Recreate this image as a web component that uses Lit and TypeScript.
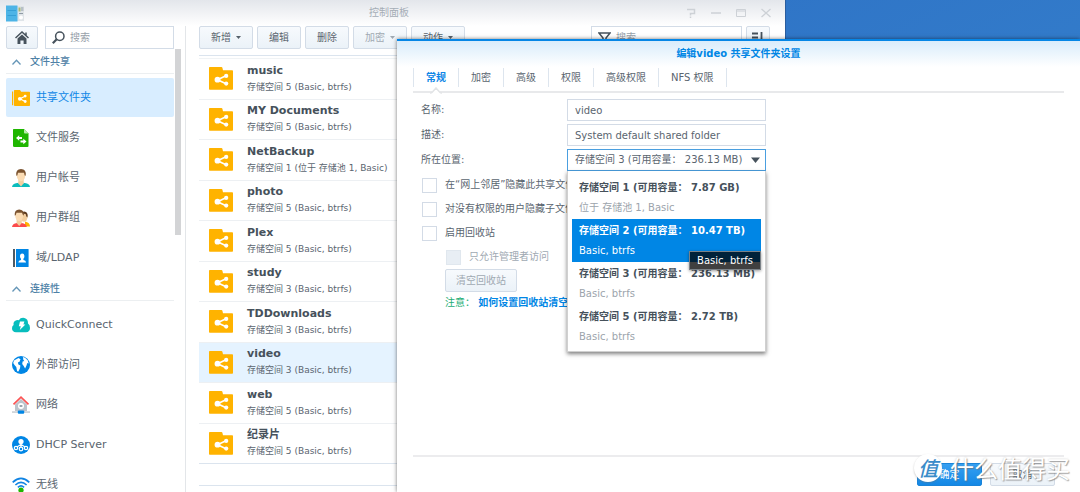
import { LitElement, html, css, svg, TemplateResult } from "lit";
import { customElement, state } from "lit/decorators.js";
import { classMap } from "lit/directives/class-map.js";

interface NavItem { icon: string; label: string; }
interface NavGroup { title: string; items: NavItem[]; }
interface Share { name: string; place: string; }
interface Volume { name: string; detail: string; }

const GROUPS: NavGroup[] = [
  {
    title: "文件共享",
    items: [
      { icon: "share", label: "共享文件夹" },
      { icon: "service", label: "文件服务" },
      { icon: "user", label: "用户帐号" },
      { icon: "group", label: "用户群组" },
      { icon: "ldap", label: "域/LDAP" },
    ],
  },
  {
    title: "连接性",
    items: [
      { icon: "cloud", label: "QuickConnect" },
      { icon: "globe", label: "外部访问" },
      { icon: "network", label: "网络" },
      { icon: "dhcp", label: "DHCP Server" },
      { icon: "wifi", label: "无线" },
    ],
  },
];

const SHARES: Share[] = [
  { name: "music", place: "存储空间 5 (Basic, btrfs)" },
  { name: "MY Documents", place: "存储空间 5 (Basic, btrfs)" },
  { name: "NetBackup", place: "存储空间 1 (位于 存储池 1, Basic)" },
  { name: "photo", place: "存储空间 5 (Basic, btrfs)" },
  { name: "Plex", place: "存储空间 5 (Basic, btrfs)" },
  { name: "study", place: "存储空间 3 (Basic, btrfs)" },
  { name: "TDDownloads", place: "存储空间 3 (Basic, btrfs)" },
  { name: "video", place: "存储空间 3 (Basic, btrfs)" },
  { name: "web", place: "存储空间 5 (Basic, btrfs)" },
  { name: "纪录片", place: "存储空间 5 (Basic, btrfs)" },
];

const VOLUMES: Volume[] = [
  { name: "存储空间 1 (可用容量： 7.87 GB)", detail: "位于 存储池 1, Basic" },
  { name: "存储空间 2 (可用容量： 10.47 TB)", detail: "Basic, btrfs" },
  { name: "存储空间 3 (可用容量： 236.13 MB)", detail: "Basic, btrfs" },
  { name: "存储空间 5 (可用容量： 2.72 TB)", detail: "Basic, btrfs" },
];

const TABS = ["常规", "加密", "高级", "权限", "高级权限", "NFS 权限"];

const ICONS: Record<string, TemplateResult> = {
  share: svg`<path d="M0 2.6h1.2v13.6H0z" fill="#ffb300"/><path d="M2 1.6Q2 1 2.6 1H8l1.2 1.8h8q.8 0 .8.8v12.6q0 .8-.8.8H2.8Q2 17 2 16.2z" fill="#ffb300"/><path d="M8 9.8l5-2.6M8 9.8l5 2.6" stroke="#fff" stroke-width="1.1"/><circle cx="7.8" cy="9.8" r="1.9" fill="#fff"/><circle cx="13.2" cy="7.1" r="1.4" fill="#fff"/><circle cx="13.2" cy="12.5" r="1.4" fill="#fff"/>`,
  service: svg`<path d="M1.5 0H12l4.5 4.5V17q0 1-1 1h-13q-1.500 0-1.500-1V1Q1 0 1.500 0z" fill="#1fb600"/><path d="M12 0l4.500 4.500H13q-1 0-1-1z" fill="#b9ecab"/><path d="M4 9l3.200-2.800v1.900H10v1.800H7.200v1.900zM14.500 12.500l-3.200-2.800v1.900H8.500v1.800h2.800v1.900z" fill="#fff"/>`,
  user: svg`<path d="M0 18q.4-3.600 6.600-4.200h4.800Q17.600 14.400 18 18z" fill="#0cbcbd"/><path d="M6.300 10h5.400v4.200L9 17.600l-2.700-3.400z" fill="#f3cf9f"/><ellipse cx="9" cy="6.800" rx="4.200" ry="5.400" fill="#fbdcb4"/><path d="M4.300 6.800Q3.400 0 9 0t4.700 6.800l-1-.4-.7-2.600H6l-.7 2.600z" fill="#7c5430"/>`,
  group: svg`<path d="M13 12.500q5 1 5 5h-5z" fill="#ffb300"/><ellipse cx="12" cy="8" rx="3.500" ry="4.800" fill="#f3cf9f"/><path d="M9 4.500Q11 1.600 14 3q2.400 1.600 1.400 5.500l-1-1-.8-2.500z" fill="#5f3d22"/><path d="M0 18q.4-3.200 5-3.900h4.600q4.800.7 5.200 3.900z" fill="#fb4b4b"/><path d="M4.600 10h5.200v4l-2.600 3-2.600-3z" fill="#f3cf9f"/><ellipse cx="7.200" cy="6.800" rx="4" ry="5.200" fill="#fbdcb4"/><path d="M2.700 6.500Q2.200.4 7.200.4t4.700 6.100l-1-.6-.8-2.200H4.500l-.8 2.600z" fill="#7c5430"/>`,
  ldap: svg`<path d="M1 0h2v18H1z" fill="#4e5a64"/><path d="M4 0h12q.6 0 .6.6v16.800q0 .6-.6.6H4z" fill="#0086e5"/><path d="M6.300 13.600q.2-2.400 2.700-2.700V9.800Q7.900 8.700 8 6.900 8.200 4.600 10.200 4.600t2.200 2.300q.1 1.800-1 2.900v1.100q2.500.3 2.700 2.700z" fill="#fff"/>`,
  cloud: svg`<path d="M4 16.300Q0 16 0 12.300q0-2.400 1.600-3.300Q.9 5.400 4.400 4.300 6 3.900 6.800 4.300 8.600 1.300 12.400 2q3.800.9 3.600 5.600 2 1.300 2 4.400 0 4-4 4.300z" fill="#08bdbd"/><path d="M8 5.400h4.400l-1 3.200h2L7.800 14l1-3.800h-2z" fill="#fff"/>`,
  globe: svg`<circle cx="9" cy="9" r="9" fill="#0086e5"/><path d="M2 4.500L6.500 2l2 1.200-1 2.500-1.600.7.500 2 2 1-.4 2.800-1.600 3.300-1.300-.3-.8-4.200L2.500 9 1.200 7zM11 1l2 .7 2.700 2.500 1 3.400-1.400-.7-.8 2.600-1.400 3-1.400-2.500-1.500-2 .4-2.500 1.700-.5-1-1.300z" fill="#fff"/>`,
  network: svg`<path d="M3 8.500L9 3l6 5.500V15H3z" fill="#bcc3cb"/><circle cx="9" cy="10" r="3" fill="#fff"/><path d="M7.600 9h2.800v2H7.600z" fill="#9ba5af"/><path d="M1.500 8.300L9 1.200l7.500 7.100" stroke="#fb5454" stroke-width="1.700" fill="none"/><path d="M0 15.400h18v1.300H0z" fill="#bcc3cb"/><rect x="5.800" y="14.400" width="6.400" height="3.400" rx="1" fill="#0086e5"/>`,
  dhcp: svg`<circle cx="9" cy="9" r="9" fill="#0086e5"/><circle cx="9" cy="5.500" r="2.600" fill="#fff"/><path d="M9 7v4.500M9 8.500l-5 3M9 8.500l5 3" stroke="#fff" stroke-width="1.200"/><g fill="#0086e5" stroke="#fff" stroke-width="1.200"><circle cx="4" cy="12" r="1.700"/><circle cx="9" cy="13" r="1.800"/><circle cx="14" cy="12" r="1.700"/></g>`,
  wifi: svg`<path d="M.7 6.300Q9-1.500 17.300 6.300" stroke="#1184e3" stroke-width="1.700" fill="none"/><path d="M3.400 9Q9 3.800 14.600 9" stroke="#1184e3" stroke-width="1.600" fill="none"/><path d="M5.900 11.400Q9 8.300 12.100 11.400" stroke="#1184e3" stroke-width="1.500" fill="none"/><circle cx="9" cy="14.200" r="2.600" fill="#1fb600"/>`,
};

const folderIcon = html`<svg class="folder" viewBox="0 0 24 23" aria-hidden="true">
  <path d="M0 .8Q0 0 .8 0h11.600q.8 0 1 .8l.6 2.400h9.200q.8 0 .8.800v18q0 .8-.8.800H.8q-.8 0-.8-.8z" fill="#ffb300" />
  <path d="M8.500 12.700l8.500-4M8.500 12.700l8.500 4" stroke="#fff" stroke-width="1.600" />
  <circle cx="8.500" cy="12.700" r="2.900" fill="#fff" />
  <circle cx="17.200" cy="8.900" r="2.100" fill="#fff" />
  <circle cx="17.200" cy="16.600" r="2.100" fill="#fff" />
</svg>`;

@customElement("app-root")
export class AppRoot extends LitElement {
  @state() private nav = "共享文件夹";
  @state() private share = "video";
  @state() private tab = "常规";
  @state() private hovered = 1;

  static styles = css`
    :host {
      display: block;
      position: relative;
      height: 100vh;
      overflow: hidden;
      background: linear-gradient(155deg, #2a6bc3, #337cca 60%, #2d70c0);
      font: 10px/16px "DejaVu Sans", "Noto Sans CJK SC", sans-serif;
      color: #5a656f;
    }
    * { box-sizing: border-box; }
    button, input, select { font: inherit; color: inherit; margin: 0; }
    input, select { border-radius: 0; }
    svg { display: block; flex: none; }

    .window {
      position: absolute;
      inset: 0 auto 0 0;
      width: 786px;
      display: flex;
      flex-direction: column;
      background: #fff linear-gradient(#e3e6eb, #fff 26px) no-repeat;
      border-right: 1px solid #2a5d9e;
    }
    .titlebar { display: grid; grid-template-columns: 1fr auto 1fr; align-items: center; height: 26px; flex: none; padding: 0 12px 0 5px; }
    .titlebar h1 { margin: 0; font-size: 10px; font-weight: 400; color: #a5adb6; }
    .controls { display: flex; justify-content: flex-end; gap: 11px; }
    .controls button { border: 0; background: none; padding: 0; width: 14px; height: 14px; }
    .body { flex: 1; display: flex; min-height: 0; }

    .side { width: 186px; flex: none; display: flex; flex-direction: column; padding-left: 6px; border-right: 1px solid #e3e6e9; }
    .find { display: flex; gap: 7px; padding-right: 11px; height: 23px; flex: none; }
    .btn {
      height: 23px;
      border: 1px solid #d3dce7;
      border-radius: 2px;
      background: linear-gradient(#f7fafd, #ebf2f8);
      padding: 0 11px;
      display: flex;
      align-items: center;
      justify-content: center;
      gap: 5px;
      white-space: nowrap;
    }
    .btn.dim { color: #a0a9b2; }
    .home { width: 32px; padding: 0; }
    .box { display: flex; align-items: center; gap: 5px; height: 23px; border: 1px solid #d3dce7; background: #fff; padding: 0 6px; }
    .box input { flex: 1; width: 0; min-width: 0; border: 0; padding: 0; outline: 0; background: none; }
    input::placeholder { color: #98a1aa; opacity: 1; }
    .find .box { flex: 1; min-width: 0; }
    .scroll { display: flex; flex: 1; min-height: 0; }
    nav { flex: 1; padding-top: 2px; overflow: hidden; }
    .thumb { width: 6px; height: 186px; margin: 0 4px 0 1px; background: #d3d4d6; }
    .group { margin: 0; height: 23px; display: flex; align-items: center; gap: 9px; padding-left: 6px; border-bottom: 1px solid #eceff1; font-size: 10px; font-weight: 500; color: #4e81a6; }
    .links { list-style: none; margin: 0; padding: 4px 0 0; }
    .links a {
      display: flex; align-items: center; gap: 6px; height: 39px; margin-bottom: 1px; padding-left: 6px;
      border-radius: 2px; font-size: 11px; color: inherit; text-decoration: none;
    }
    .links a.on { background: #d8edff; color: #0f86e6; }

    .main { flex: 1; min-width: 0; display: flex; flex-direction: column; padding: 0 15px 6px 13px; }
    .tools { display: flex; gap: 4px; padding-bottom: 6px; border-bottom: 1px solid #dbe4ee; }
    .tools .box { margin-left: auto; width: 151px; }
    .tools .sort { width: 24px; padding: 0; }
    .shares { list-style: none; margin: 2px 0 0; padding: 0; flex: 1; display: grid; grid-auto-rows: 1fr; border-top: 1px solid #f0f3f5; }
    .shares li { display: flex; align-items: center; gap: 14px; padding-left: 10px; border-bottom: 1px solid #edf0f3; }
    .shares li.on { background: #e5f3ff; }
    .shares li:last-child { border-color: #dbe4ee; }
    .shares strong { display: block; font-size: 11px; line-height: 16px; color: #46515b; }
    .shares span { display: block; font-size: 9px; line-height: 16px; }
    .folder { width: 24px; height: 23px; }
    .pager { height: 22px; flex: none; border-bottom: 1px solid #dbe4ee; }

    .dialog {
      position: absolute;
      inset: 39px 0 0 397px;
      display: flex;
      flex-direction: column;
      padding: 0 16px;
      background: #fff linear-gradient(#d9ecfb, #fff 26px) no-repeat;
      border-top: 2px solid #0586e6;
      box-shadow: 0 0 4px rgba(0, 0, 0, 0.55);
    }
    .dialog h2 { margin: 0; font-size: 10px; line-height: 26px; text-align: center; color: #0086e5; }
    .tabs { display: flex; height: 26px; flex: none; padding-top: 1px; border-bottom: 2px solid #e8e9eb; }
    .tabs button {
      position: relative; height: 19px; padding: 0 12px; border: 0; border-right: 1px solid #dde5ee; background: none;
    }
    .tabs button:first-child { border-left: 1px solid #dde5ee; }
    .tabs button.on { color: #0f86e6; font-weight: 700; }
    .tabs svg { position: absolute; left: 16px; top: 19px; }

    form { padding: 6px 8px 0; display: flex; flex-direction: column; align-items: flex-start; }
    .fields { display: grid; gap: 3px; }
    .field { display: grid; grid-template-columns: 146px 199px; align-items: center; }
    .text, .pick { width: 100%; height: 22px; padding: 0 7px; border: 1px solid #d3dbe6; background: #fff; outline: 0; }
    .combo { position: relative; }
    .pick { display: block; appearance: none; border-color: #4a9fe0; }
    .arrow { position: absolute; right: 6px; top: 8px; pointer-events: none; }
    .menu {
      position: absolute; z-index: 2; left: 0; right: 0; top: 22px; margin: 0; padding: 5px 4px 3px; list-style: none;
      background: #fff; border: 1px solid #d0d0d0; border-top: 0; box-shadow: 0 2px 4px rgba(0, 0, 0, 0.5);
    }
    .menu li { height: 43px; padding: 2px 7px 0; line-height: 20px; white-space: nowrap; color: #9ca4ac; }
    .menu strong { display: block; color: #46515b; }
    .menu li.on, .menu li.on strong { color: #fff; }
    .menu li.on { background: #0086e5; }
    .tip {
      position: absolute; z-index: 3; right: 5px; top: 102px; height: 19px; padding: 0 7px; line-height: 17px;
      border: 1px solid #7b8288; background: rgba(0, 0, 0, 0.75); color: #fff; box-shadow: 0 1px 3px rgba(0, 0, 0, 0.4);
    }
    .checks { padding-top: 2px; }
    .check { display: flex; align-items: center; gap: 8px; height: 24px; padding-left: 1px; white-space: nowrap; }
    .check input { appearance: none; width: 15px; height: 15px; border: 1px solid #d3dbe6; background: #fff; }
    .check.sub { padding-left: 25px; color: #a0a9b2; }
    .check.sub input { background: #e8eef4; border-color: #e0e7ee; }
    .empty { width: 72px; margin: 0 0 3px 24px; }
    .note { margin: 0 0 0 24px; white-space: nowrap; color: #22ad74; }
    .note a { color: #0086e5; font-weight: 700; text-decoration: none; }
    .actions { margin-top: auto; display: flex; justify-content: flex-end; gap: 8px; padding: 6px 9px; border-top: 2px solid #ececee; }
    .actions .btn { width: 65px; }
    .actions .ok { background: linear-gradient(#35a0f2, #1488e5); border-color: #1a84d9; color: #fff; }

    .mark {
      position: absolute; z-index: 4; right: 10px; bottom: 8px; display: flex; align-items: center; gap: 8px;
      font: 24px/32px "Noto Sans CJK SC", sans-serif; color: #fff; pointer-events: none;
      text-shadow: 1px 1px 1px rgba(110, 110, 110, 0.6), 0 0 2px rgba(130, 130, 130, 0.4);
    }
    .mark b {
      width: 28px; height: 28px; border-radius: 50%; background: #fff; color: #3a8cc9; text-align: center;
      font: italic 500 20px/27px "Noto Sans CJK SC", sans-serif; text-shadow: none; box-shadow: 0 1px 2px rgba(110, 110, 110, 0.4);
    }
  `;

  private caret(color: string) {
    return html`<svg width="5" height="3" viewBox="0 0 5 3" aria-hidden="true"><path d="M0 0h5L2.500 3z" fill=${color} /></svg>`;
  }

  private renderNav() {
    return GROUPS.map((g) => html`
      <h2 class="group">
        <svg width="9" height="6" viewBox="0 0 9 6" aria-hidden="true"><path d="M.5 5.500l4-4.300 4 4.300" fill="none" stroke="#6596b7" stroke-width="1.300" /></svg>
        ${g.title}
      </h2>
      <ul class="links">
        ${g.items.map((i) => html`<li>
          <a href="#" class=${classMap({ on: i.label === this.nav })} @click=${(e: Event) => { e.preventDefault(); this.nav = i.label; }}>
            <svg width="18" height="18" viewBox="0 0 18 18" aria-hidden="true">${ICONS[i.icon]}</svg>${i.label}
          </a></li>`)}
      </ul>`);
  }

  private renderWindow() {
    return html`<section class="window">
      <header class="titlebar">
        <svg width="20" height="17" viewBox="0 0 20 17" aria-hidden="true">
          <path d="M12 1h7v15h-7z" fill="#dfe4e8" /><path d="M13.500 2.500h2v4h-2z" fill="#a6b873" /><path d="M16 2.500h2.500v1H16zM16 4.500h2.500v1H16zM14 8h4v1h-4z" fill="#8f9ba5" />
          <circle cx="16" cy="12.500" r="2" fill="#fff" /><path d="M1 .5h11.500v16H1z" fill="#4db4e6" /><path d="M2.500 5.500h8.500M2.500 10.500h8.500" stroke="#359fd6" stroke-width="1" />
        </svg>
        <h1>控制面板</h1>
        <div class="controls">
          <button aria-label="帮助"><svg width="14" height="14" viewBox="0 0 14 14" fill="none" stroke="#cdd1d6" stroke-width="1.500"><path d="M3 3.500h7.500v4H6.500v2M6.500 10.500v1.500" /></svg></button>
          <button aria-label="最小化"><svg width="14" height="14" viewBox="0 0 14 14" stroke="#cdd1d6" stroke-width="1.500"><path d="M2 7h10" /></svg></button>
          <button aria-label="最大化"><svg width="14" height="14" viewBox="0 0 14 14" fill="none" stroke="#cdd1d6"><path d="M2.500 3.500h9v7h-9zM2.500 5h9" /></svg></button>
          <button aria-label="关闭"><svg width="14" height="14" viewBox="0 0 14 14" stroke="#cdd1d6" stroke-width="1.300"><path d="M2.500 3l9 8M11.500 3l-9 8" /></svg></button>
        </div>
      </header>
      <div class="body">
        <aside class="side">
          <div class="find">
            <button class="btn home" aria-label="主页">
              <svg width="14" height="13" viewBox="0 0 14 13" aria-hidden="true"><path d="M.5 7L7 1l6.500 6M11 1.500v3" fill="none" stroke="#46525c" stroke-width="1.500" /><path d="M2.500 7.500L7 3.400l4.500 4.100V13H8.600V9.500H5.400V13H2.500z" fill="#46525c" /></svg>
            </button>
            <label class="box">
              <svg width="13" height="13" viewBox="0 0 13 13" aria-hidden="true"><circle cx="7.800" cy="5.200" r="4.200" fill="none" stroke="#46525c" stroke-width="1.500" /><path d="M4.700 8.300L.8 12.200" stroke="#46525c" stroke-width="2.200" /></svg>
              <input type="search" placeholder="搜索" aria-label="搜索" />
            </label>
          </div>
          <div class="scroll"><nav>${this.renderNav()}</nav><div class="thumb"></div></div>
        </aside>
        <div class="main">
          <div class="tools">
            <button class="btn">新增${this.caret("#56616b")}</button>
            <button class="btn">编辑</button>
            <button class="btn">删除</button>
            <button class="btn dim">加密${this.caret("#a0a9b2")}</button>
            <button class="btn">动作${this.caret("#56616b")}</button>
            <label class="box">
              <svg width="13" height="12" viewBox="0 0 13 12" aria-hidden="true"><path d="M1 1h11L8 6v5L5 9V6z" fill="none" stroke="#46525c" stroke-width="1.500" /></svg>
              <input type="search" placeholder="搜索" aria-label="筛选" />
            </label>
            <button class="btn sort" aria-label="排序">
              <svg width="14" height="12" viewBox="0 0 14 12" aria-hidden="true"><path d="M1 1.500h6M1 5.500h6M1 9.500h6M10.500 0v9" stroke="#46525c" stroke-width="1.800" /><path d="M7.500 7.500h6l-3 4z" fill="#46525c" /></svg>
            </button>
          </div>
          <ul class="shares">
            ${SHARES.map((s) => html`<li class=${classMap({ on: s.name === this.share })} @click=${() => (this.share = s.name)}>
              ${folderIcon}<div><strong>${s.name}</strong><span>${s.place}</span></div>
            </li>`)}
          </ul>
          <div class="pager"></div>
        </div>
      </div>
    </section>`;
  }

  private renderDialog() {
    return html`<section class="dialog" role="dialog" aria-labelledby="dlg-title">
      <h2 id="dlg-title">编辑video 共享文件夹设置</h2>
      <div class="tabs" role="tablist">
        ${TABS.map((t) => html`<button role="tab" class=${classMap({ on: t === this.tab })} @click=${() => (this.tab = t)}>
          ${t}${t === this.tab ? html`<svg width="12" height="7" viewBox="0 0 12 7" aria-hidden="true"><path d="M0 7l6-6 6 6z" fill="#fff" /><path d="M0 6q1.500 0 2.200-.8L6 1l3.800 4.200Q10.500 6 12 6" fill="none" stroke="#e2e4e6" stroke-width="1.500" /></svg>` : ""}
        </button>`)}
      </div>
      <form @submit=${(e: Event) => e.preventDefault()}>
        <div class="fields">
          <div class="field"><label for="name">名称:</label><input id="name" class="text" .value=${"video"} /></div>
          <div class="field"><label for="desc">描述:</label><input id="desc" class="text" .value=${"System default shared folder"} /></div>
          <div class="field">
            <label for="place">所在位置:</label>
            <div class="combo">
              <select id="place" class="pick">
                ${VOLUMES.map((v, i) => html`<option ?selected=${i === 2}>${v.name}</option>`)}
              </select>
              <svg class="arrow" width="9" height="6" viewBox="0 0 9 6" aria-hidden="true"><path d="M0 .5h9L4.500 6z" fill="#46525c" /></svg>
              <ul class="menu" role="listbox" aria-label="所在位置">
                ${VOLUMES.map((v, i) => html`<li role="option" class=${classMap({ on: i === this.hovered })} @mouseenter=${() => (this.hovered = i)}>
                  <strong>${v.name}</strong>${v.detail}
                </li>`)}
              </ul>
              <div class="tip" role="tooltip">Basic, btrfs</div>
            </div>
          </div>
        </div>
        <div class="checks">
          <label class="check"><input type="checkbox" />在“网上邻居”隐藏此共享文件夹</label>
          <label class="check"><input type="checkbox" />对没有权限的用户隐藏子文件夹</label>
          <label class="check"><input type="checkbox" />启用回收站</label>
          <label class="check sub"><input type="checkbox" disabled />只允许管理者访问</label>
        </div>
        <button type="button" class="btn dim empty">清空回收站</button>
        <p class="note">注意： <a href="#">如何设置回收站清空计划</a></p>
      </form>
      <div class="actions">
        <button class="btn ok">确定</button>
        <button class="btn">取消</button>
      </div>
    </section>`;
  }

  render() {
    return html`${this.renderWindow()}${this.renderDialog()}
      <div class="mark"><b>值</b><span>什么值得买</span></div>`;
  }
}
